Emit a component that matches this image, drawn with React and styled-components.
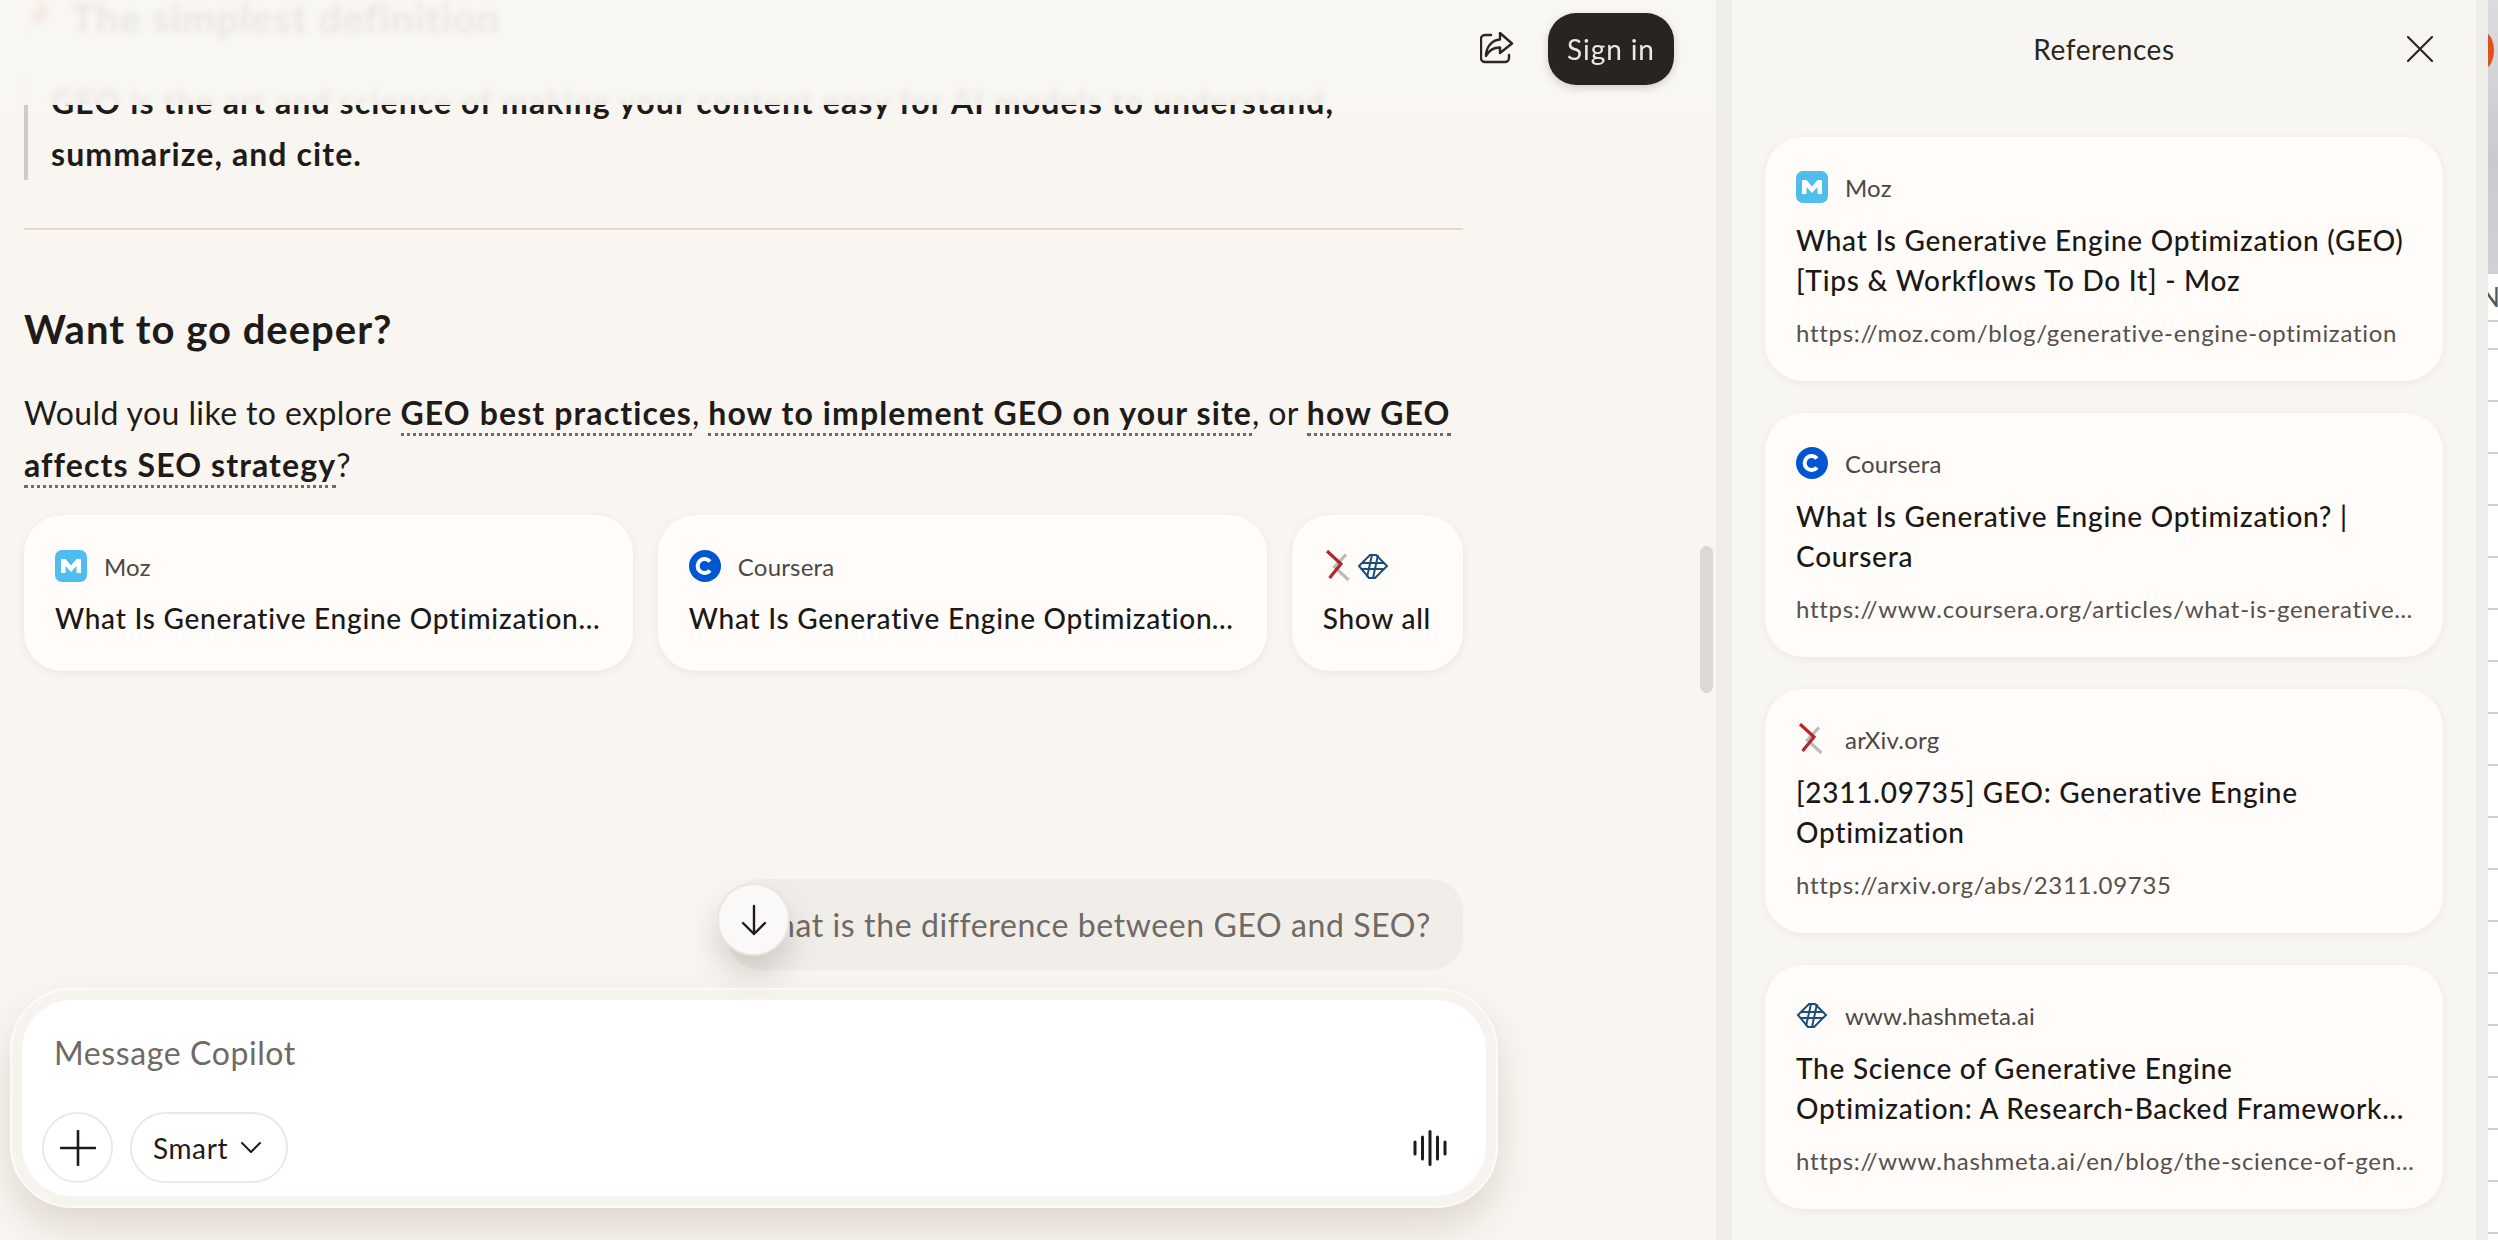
import styled, { createGlobalStyle } from "styled-components";

const GlobalStyle = createGlobalStyle`
  html, body { margin: 0; padding: 0; background: #f9f6f2; }
  body { font-family: "Lato", "Noto Sans", sans-serif; color: #1f1b18; }
  * { box-sizing: border-box; }
`;

const Page = styled.div`
  display: flex;
  width: 2498px;
  height: 1240px;
  overflow: hidden;
`;

const Main = styled.main`
  position: relative;
  display: flex;
  flex-direction: column;
  width: 1716px;
  flex: none;
  overflow: hidden;
  background: #f9f6f2;
`;

const Conversation = styled.div`
  flex: 1;
  min-height: 0;
  width: 1463px;
  margin-top: -8px;
  padding-left: 24px;
  display: flex;
  flex-direction: column;
`;

const SectionTitle = styled.h2`
  display: flex;
  align-items: center;
  gap: 17px;
  margin: 0 0 32px;
  font-size: 40px;
  line-height: 52px;
  font-weight: 700;
  letter-spacing: 1px;
`;

const Quote = styled.blockquote`
  margin: 0;
  padding-left: 23px;
  border-left: 4px solid #cfccc8;
  font-size: 32px;
  line-height: 52px;
  font-weight: 700;
  letter-spacing: 1.1px;
  height: 104px;
`;

const Rule = styled.hr`
  width: 100%;
  height: 2px;
  margin: 48px 0 0;
  border: 0;
  background: #e8d6c8;
`;

const Heading = styled.h3`
  margin: 69px 0 0;
  font-size: 40px;
  line-height: 60px;
  font-weight: 700;
  letter-spacing: 1px;
`;

const Paragraph = styled.p`
  margin: 28px 0 0;
  font-size: 32px;
  line-height: 52px;
  letter-spacing: 0.4px;
`;

const Term = styled.strong`
  font-weight: 700;
  letter-spacing: 1.1px;
  border-bottom: 3px dotted #6f6a66;
  padding-bottom: 1px;
`;

const SourceRow = styled.div`
  display: flex;
  gap: 25px;
  margin-top: 24px;
`;

const SourceCard = styled.div`
  flex: ${(p) => (p.$compact ? "none" : "1 1 0")};
  min-width: 0;
  height: 156px;
  padding: 35px 32px 0 31px;
  border-radius: 38px;
  background: #fffcf9;
  box-shadow: 0 2px 8px rgba(90, 70, 50, 0.09);
`;

const SourceHead = styled.div`
  display: flex;
  align-items: center;
  gap: 17px;
  height: 32px;
  font-size: 24px;
  letter-spacing: 0.2px;
  color: #4c4744;
`;

const SourceTitle = styled.div`
  margin-top: 16px;
  font-size: 28px;
  line-height: 40px;
  font-weight: 500;
  letter-spacing: 0.75px;
  color: #1b1815;
  white-space: nowrap;
  overflow: hidden;
  text-overflow: ellipsis;
`;

const IconStack = styled.div`
  display: flex;
  gap: 2px;
  height: 32px;
  align-items: center;
`;

const Bubble = styled.div`
  align-self: flex-end;
  margin-top: 208px;
  height: 91px;
  padding: 0 32px 0 15px;
  display: flex;
  align-items: center;
  border-radius: 32px;
  background: #f1eeea;
  color: #6f6a66;
  font-size: 32px;
  letter-spacing: 0.6px;
  white-space: nowrap;
`;

const ScrollDown = styled.button`
  position: absolute;
  left: 717px;
  top: 883px;
  width: 73px;
  height: 73px;
  padding: 0;
  display: flex;
  align-items: center;
  justify-content: center;
  border: 2px solid #e9e6e2;
  border-radius: 50%;
  background: #fbf9f7;
  box-shadow: 0 18px 32px rgba(70, 50, 35, 0.2);
`;

const ComposerDock = styled.div`
  position: relative;
  flex: none;
  height: 252px;
  padding: 0 218px 32px 10px;
`;

const ComposerFrame = styled.div`
  width: 1488px;
  height: 220px;
  padding: 10px;
  border: 2px solid #fdfbf9;
  border-radius: 62px;
  background: #f7f3ee;
  box-shadow: 0 20px 40px rgba(120, 90, 60, 0.2);
`;

const ComposerBox = styled.div`
  display: flex;
  flex-direction: column;
  justify-content: space-between;
  height: 196px;
  padding: 33px 20px 13px 20px;
  border-radius: 50px;
  background: #ffffff;
`;

const Placeholder = styled.div`
  padding-left: 12px;
  font-size: 32px;
  line-height: 40px;
  letter-spacing: 0.6px;
  color: #6f6a66;
`;

const ComposerTools = styled.div`
  display: flex;
  align-items: center;
  gap: 17px;
`;

const ToolButton = styled.button`
  display: flex;
  align-items: center;
  justify-content: center;
  gap: 13px;
  height: 71px;
  min-width: 71px;
  padding: ${(p) => (p.$pill ? "0 25px 0 21px" : "0")};
  border: 2px solid #ebe9e6;
  border-radius: 36px;
  background: #ffffff;
  font-family: inherit;
  font-size: 28px;
  letter-spacing: 0.6px;
  color: #1f1b18;
`;

const VoiceButton = styled.div`
  margin-left: auto;
  margin-right: 19px;
  display: flex;
`;

const TopBar = styled.header`
  position: absolute;
  left: 0;
  top: 0;
  right: 0;
  height: 105px;
  display: flex;
  align-items: flex-start;
  justify-content: flex-end;
  gap: 34px;
  padding: 13px 42px 0 0;
  background: rgba(249, 246, 242, 0.93);
  backdrop-filter: blur(3px);
`;

const ShareButton = styled.div`
  display: flex;
  margin-top: 19px;
`;

const SignIn = styled.button`
  width: 126px;
  height: 72px;
  border: 0;
  border-radius: 28px;
  background: #282420;
  color: #ece8e4;
  font-family: inherit;
  font-size: 28px;
  letter-spacing: 0.9px;
  box-shadow: 0 3px 8px rgba(40, 30, 20, 0.18);
`;

const ScrollThumb = styled.div`
  position: absolute;
  right: 3px;
  top: 546px;
  width: 13px;
  height: 147px;
  border-radius: 7px;
  background: #dcd9d5;
`;

const Gutter = styled.div`
  flex: none;
  width: ${(p) => p.$width}px;
  background: #efedea;
`;

const Panel = styled.aside`
  flex: none;
  width: 744px;
  padding: 0 33px;
  background: #f8f6f3;
`;

const PanelHeader = styled.div`
  position: relative;
  display: flex;
  align-items: center;
  justify-content: center;
  height: 98px;
  margin-bottom: 39px;
  font-size: 28px;
  letter-spacing: 0.6px;
  color: #2a2622;
`;

const CloseButton = styled.div`
  position: absolute;
  right: 10px;
  top: 36px;
  display: flex;
`;

const RefList = styled.div`
  display: flex;
  flex-direction: column;
  gap: 32px;
`;

const RefCard = styled.article`
  height: 244px;
  padding: 34px 26px 0 31px;
  border-radius: 38px;
  background: #fffcf9;
  box-shadow: 0 2px 8px rgba(90, 70, 50, 0.08);
`;

const RefTitle = styled.div`
  margin-top: 17px;
  height: 80px;
  padding-right: 6px;
  font-size: 28px;
  line-height: 40px;
  font-weight: 500;
  letter-spacing: 0.75px;
  color: #1b1815;
  display: -webkit-box;
  -webkit-box-orient: vertical;
  -webkit-line-clamp: 2;
  overflow: hidden;
`;

const RefUrl = styled.div`
  margin-top: 17px;
  font-size: 24px;
  line-height: 32px;
  letter-spacing: 0.7px;
  color: #55504c;
  white-space: nowrap;
  overflow: hidden;
  text-overflow: ellipsis;
`;

const BackWindow = styled.div`
  position: relative;
  flex: 1;
  overflow: hidden;
  background: linear-gradient(#dcdcde 0, #c8cad0 160px, #cfd1d6 272px, #cfcfcf 272px, #cfcfcf 274px, #ffffff 274px);
`;

const BackDot = styled.div`
  position: absolute;
  left: -12px;
  top: 33px;
  width: 18px;
  height: 35px;
  border-radius: 50%;
  background: #e0501f;
`;

const BackLabel = styled.div`
  position: absolute;
  left: -8px;
  top: 282px;
  font-size: 26px;
  line-height: 30px;
  color: #555555;
`;

const BackRows = styled.div`
  position: absolute;
  left: 0;
  right: 0;
  top: 320px;
  bottom: 0;
  border-top: 2px solid #cfcfcf;
  background: linear-gradient(#ffffff 0, #ffffff 50px, #cfcfcf 50px, #cfcfcf 52px) 0 28px / 100% 52px;
`;

const MozIcon = () => (
  <svg width="32" height="32" viewBox="0 0 32 32">
    <rect width="32" height="32" rx="7" fill="#4fbdee" />
    <path d="M6 23V9h4.500L16 15.500 21.500 9H26v14h-4.500v-7L16 22l-5.500-6v7z" fill="#fff" />
  </svg>
);

const CourseraIcon = () => (
  <svg width="32" height="32" viewBox="0 0 32 32">
    <circle cx="16" cy="16" r="16" fill="#0056d2" />
    <path d="M21 20.500a7 7 0 1 1 0-9" fill="none" stroke="#fff" strokeWidth="4" />
  </svg>
);

const ArxivIcon = () => (
  <svg width="32" height="32" viewBox="0 0 32 32" fill="none" strokeWidth="3.200">
    <path d="M23 4.500L11.500 17 25.500 30" stroke="#bdbbb8" />
    <path d="M4 1l14 13L6.500 28" stroke="#b5262f" />
  </svg>
);

const HashmetaIcon = () => (
  <svg width="32" height="32" viewBox="0 0 32 32" fill="none" stroke="#1a4f7a" strokeWidth="2">
    <path d="M2 16L13 5h6l11 11-12 12h-6z" />
    <path d="M5 13h22M5 19h22M15 5l-5 22M21 5l-5 23" />
  </svg>
);

const PinIcon = () => (
  <svg width="30" height="36" viewBox="0 0 30 36">
    <path d="M14 0l14 11-7 4-2 10-5-4-11 13 8-15-7-5 9-3z" fill="#c8302c" />
  </svg>
);

const ShareIcon = () => (
  <svg width="34" height="32" viewBox="0 0 34 32" fill="none" stroke="#2a2622" strokeWidth="2.400" strokeLinejoin="round" strokeLinecap="round">
    <path d="M11 3H5a4 4 0 0 0-4 4v19a4 4 0 0 0 4 4h20a4 4 0 0 0 4-4v-3" />
    <path d="M20 1l12 10.500L20 21v-5.500C14 15.500 9 18 6 24 6 15 12 8 20 7.500z" />
  </svg>
);

const CloseIcon = () => (
  <svg width="26" height="26" viewBox="0 0 26 26" stroke="#2a2622" strokeWidth="2.200" strokeLinecap="round">
    <path d="M1 1l24 24M25 1L1 25" />
  </svg>
);

const ArrowDownIcon = () => (
  <svg width="26" height="32" viewBox="0 0 26 32" fill="none" stroke="#1f1b18" strokeWidth="2.400" strokeLinecap="round" strokeLinejoin="round">
    <path d="M13 2v28M2 19l11 11 11-11" />
  </svg>
);

const PlusIcon = () => (
  <svg width="36" height="36" viewBox="0 0 36 36" stroke="#1f1b18" strokeWidth="2.600" strokeLinecap="round">
    <path d="M18 1v34M1 18h34" />
  </svg>
);

const ChevronIcon = () => (
  <svg width="20" height="12" viewBox="0 0 20 12" fill="none" stroke="#1f1b18" strokeWidth="2" strokeLinecap="round" strokeLinejoin="round">
    <path d="M1 1l9 9 9-9" />
  </svg>
);

const VoiceIcon = () => (
  <svg width="34" height="36" viewBox="0 0 34 36" stroke="#1f1b18" strokeWidth="3" strokeLinecap="round">
    <path d="M2 12v12M9.500 7v22M17 1.500v33M24.500 7v22M32 12v12" />
  </svg>
);

const references = [
  {
    source: "Moz",
    icon: <MozIcon />,
    title: "What Is Generative Engine Optimization (GEO) [Tips & Workflows To Do It] - Moz",
    url: "https://moz.com/blog/generative-engine-optimization",
  },
  {
    source: "Coursera",
    icon: <CourseraIcon />,
    title: "What Is Generative Engine Optimization? | Coursera",
    url: "https://www.coursera.org/articles/what-is-generative-engine-optimization",
  },
  {
    source: "arXiv.org",
    icon: <ArxivIcon />,
    title: "[2311.09735] GEO: Generative Engine Optimization",
    url: "https://arxiv.org/abs/2311.09735",
  },
  {
    source: "www.hashmeta.ai",
    icon: <HashmetaIcon />,
    title: "The Science of Generative Engine Optimization: A Research-Backed Framework for AI Search",
    url: "https://www.hashmeta.ai/en/blog/the-science-of-generative-engine-optimization",
  },
];

export default function App() {
  return (
    <>
      <GlobalStyle />
      <Page>
        <Main>
          <Conversation>
            <SectionTitle>
              <PinIcon />
              The simplest definition
            </SectionTitle>
            <Quote>GEO is the art and science of making your content easy for AI models to understand, summarize, and cite.</Quote>
            <Rule />
            <Heading>Want to go deeper?</Heading>
            <Paragraph>
              Would you like to explore <Term>GEO best practices</Term>, <Term>how to implement GEO on your site</Term>, or{" "}
              <Term>how GEO affects SEO strategy</Term>?
            </Paragraph>
            <SourceRow>
              <SourceCard>
                <SourceHead>
                  <MozIcon />
                  Moz
                </SourceHead>
                <SourceTitle>What Is Generative Engine Optimization (GEO) [Tips &amp; Workflows To Do It] - Moz</SourceTitle>
              </SourceCard>
              <SourceCard>
                <SourceHead>
                  <CourseraIcon />
                  Coursera
                </SourceHead>
                <SourceTitle>What Is Generative Engine Optimization? | Coursera</SourceTitle>
              </SourceCard>
              <SourceCard $compact>
                <IconStack>
                  <ArxivIcon />
                  <HashmetaIcon />
                </IconStack>
                <SourceTitle>Show all</SourceTitle>
              </SourceCard>
            </SourceRow>
            <Bubble>What is the difference between GEO and SEO?</Bubble>
          </Conversation>

          <ComposerDock>
            <ComposerFrame>
              <ComposerBox>
                <Placeholder>Message Copilot</Placeholder>
                <ComposerTools>
                  <ToolButton>
                    <PlusIcon />
                  </ToolButton>
                  <ToolButton $pill>
                    Smart
                    <ChevronIcon />
                  </ToolButton>
                  <VoiceButton>
                    <VoiceIcon />
                  </VoiceButton>
                </ComposerTools>
              </ComposerBox>
            </ComposerFrame>
          </ComposerDock>

          <ScrollDown>
            <ArrowDownIcon />
          </ScrollDown>
          <TopBar>
            <ShareButton>
              <ShareIcon />
            </ShareButton>
            <SignIn>Sign in</SignIn>
          </TopBar>
          <ScrollThumb />
        </Main>

        <Gutter $width={16} />

        <Panel>
          <PanelHeader>
            References
            <CloseButton>
              <CloseIcon />
            </CloseButton>
          </PanelHeader>
          <RefList>
            {references.map((ref) => (
              <RefCard key={ref.source}>
                <SourceHead>
                  {ref.icon}
                  {ref.source}
                </SourceHead>
                <RefTitle>{ref.title}</RefTitle>
                <RefUrl>{ref.url}</RefUrl>
              </RefCard>
            ))}
          </RefList>
        </Panel>

        <Gutter $width={12} />

        <BackWindow>
          <BackDot />
          <BackLabel>N</BackLabel>
          <BackRows />
        </BackWindow>
      </Page>
    </>
  );
}
